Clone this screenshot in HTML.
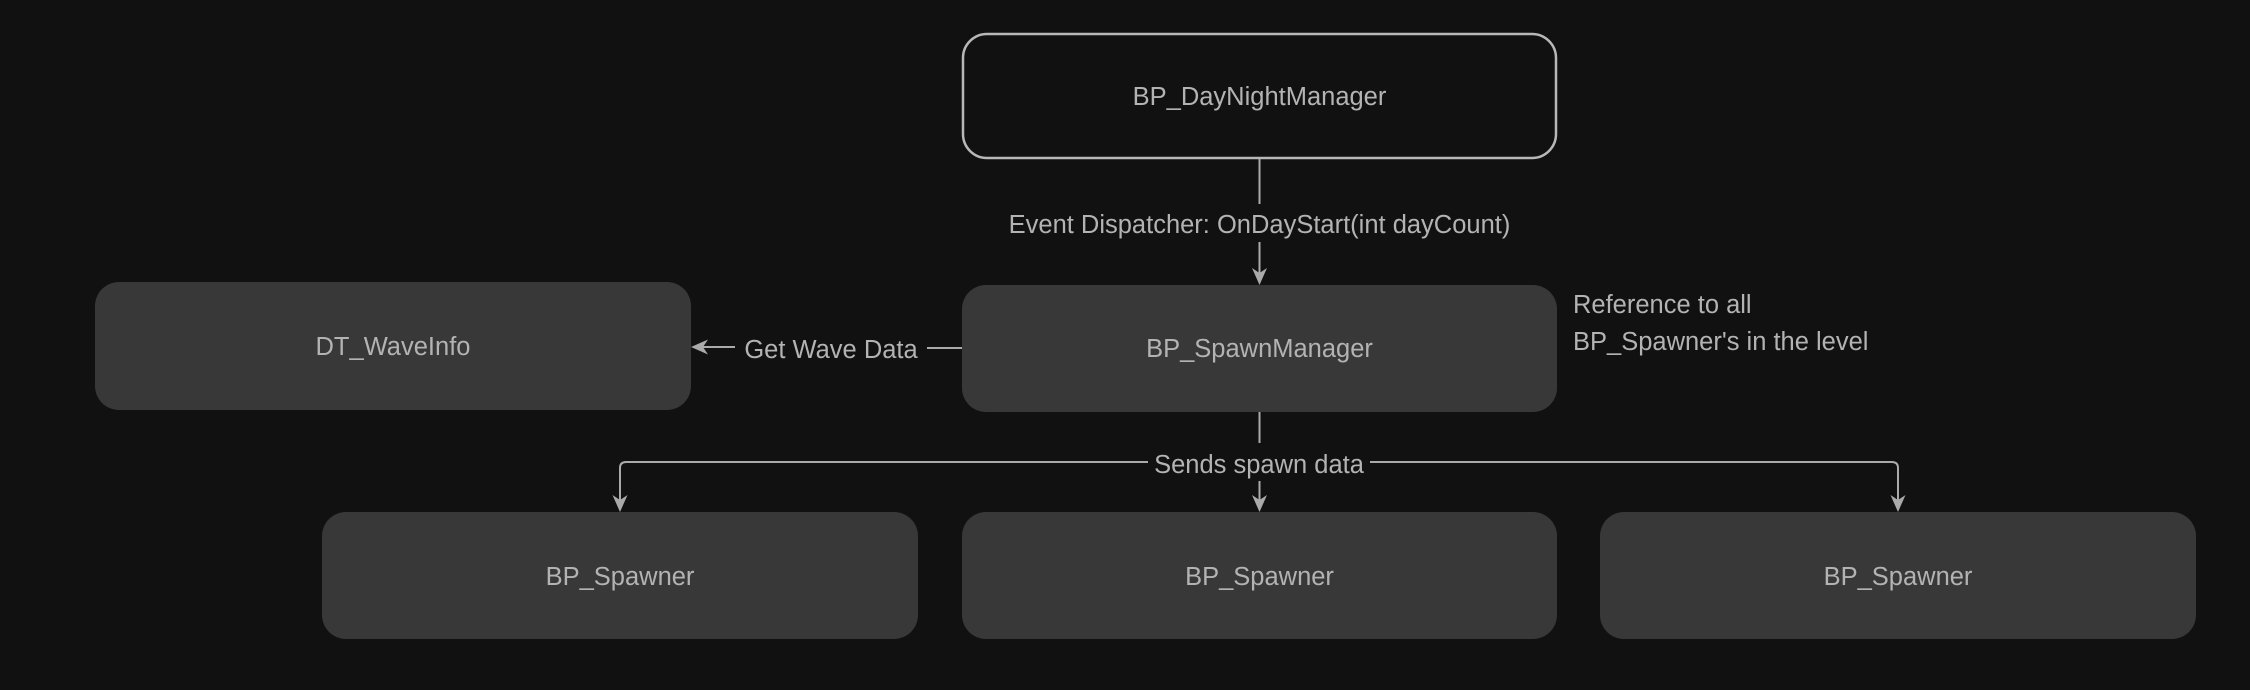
<!DOCTYPE html>
<html><head><meta charset="utf-8"><style>
html,body{margin:0;padding:0;background:#111111;}
svg{display:block;}
text{font-family:"Liberation Sans",sans-serif;font-size:25.5px;fill:#b3b3b3;}
</style></head><body>
<svg width="2250" height="690" viewBox="0 0 2250 690" xmlns="http://www.w3.org/2000/svg">
<rect width="2250" height="690" fill="#111111"/>
<!-- boxes -->
<rect x="963" y="34" width="593" height="124" rx="24" fill="#111111" stroke="#b8b8b8" stroke-width="2.5"/>
<rect x="962" y="285" width="595" height="127" rx="24" fill="#383838"/>
<rect x="95" y="282" width="596" height="128" rx="24" fill="#383838"/>
<rect x="322" y="512" width="596" height="127" rx="24" fill="#383838"/>
<rect x="962" y="512" width="595" height="127" rx="24" fill="#383838"/>
<rect x="1600" y="512" width="596" height="127" rx="24" fill="#383838"/>
<g stroke="#aaaaaa" stroke-width="2" fill="none">
<line x1="1259.5" y1="159" x2="1259.5" y2="204"/>
<line x1="1259.5" y1="242" x2="1259.5" y2="275"/>
<line x1="962" y1="348" x2="927" y2="348"/>
<line x1="735" y1="347" x2="700" y2="347"/>
<line x1="1259.5" y1="412" x2="1259.5" y2="443"/>
<line x1="1259.5" y1="481" x2="1259.5" y2="503"/>
<path d="M1148,462 H626 Q620,462 620,468 V503"/>
<path d="M1370,462 H1892 Q1898,462 1898,468 V503"/>
</g>
<g fill="#aaaaaa">
<path d="M1259.5,285 L1252,268 L1259.5,273 L1267,268 Z"/>
<path d="M1259.5,512 L1252,495 L1259.5,500 L1267,495 Z"/>
<path d="M620,512 L612.5,495 L620,500 L627.5,495 Z"/>
<path d="M1898,512 L1890.5,495 L1898,500 L1905.5,495 Z"/>
<path d="M691,347 L708,339.5 L703,347 L708,354.5 Z"/>
</g>
<g text-anchor="middle">
<text x="1259.5" y="105">BP_DayNightManager</text>
<text x="1259.5" y="233">Event Dispatcher: OnDayStart(int dayCount)</text>
<text x="1259.5" y="357">BP_SpawnManager</text>
<text x="393" y="355">DT_WaveInfo</text>
<text x="831" y="358">Get Wave Data</text>
<text x="1259" y="473">Sends spawn data</text>
<text x="620" y="585">BP_Spawner</text>
<text x="1259.5" y="585">BP_Spawner</text>
<text x="1898" y="585">BP_Spawner</text>
</g>
<text x="1573" y="313">Reference to all</text>
<text x="1573" y="350">BP_Spawner's in the level</text>
</svg>
</body></html>
